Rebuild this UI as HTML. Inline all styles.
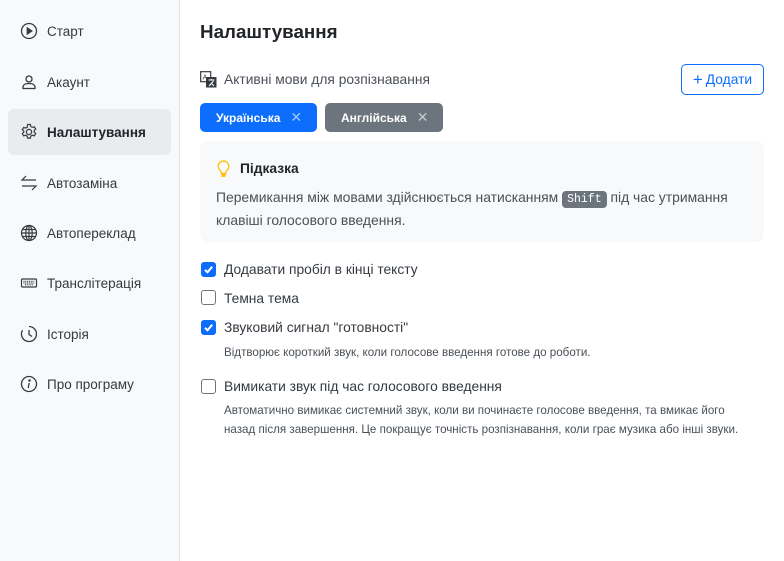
<!DOCTYPE html>
<html><head><meta charset="utf-8"><style>
*{box-sizing:border-box;margin:0;padding:0}
body{width:784px;height:561px;overflow:hidden;background:#fff;font-family:"Liberation Sans","DejaVu Sans",sans-serif;color:#212529;position:relative}
.side{position:absolute;left:0;top:0;width:180px;height:561px;background:#f8f9fa;border-right:1px solid #dee2e6}
.nav{position:absolute;left:8px;width:163px;height:46px;border-radius:6px;display:flex;align-items:center;padding-left:12px;font-size:13.5px;color:#343a40}
.nav svg{width:18px;height:18px;margin-right:9px;flex:none}
.nav.act{background:#e9ecef;font-weight:bold;color:#212529}
.abs{position:absolute}
h1{position:absolute;left:200px;top:21px;font-size:18.8px;font-weight:bold;color:#212529}
.chip{position:absolute;top:103px;height:29px;border-radius:5px;color:#fff;font-weight:bold;font-size:12px;display:flex;align-items:center;padding-left:16px}
.chip span{font-weight:normal;color:rgba(255,255,255,.6);margin-left:10px;font-size:14px}
.cb{position:absolute;left:201px;width:15px;height:15px;border-radius:3px;border:1px solid #6c757d;background:#fff}
.cb.on{background:#0d6efd;border-color:#0d6efd}
.lbl{position:absolute;left:224px;font-size:13.8px;color:#343a40}
.sub{position:absolute;left:224px;font-size:11.6px;color:#495057;line-height:19px}
</style></head><body>
<div class="side">
<div class="nav" style="top:8px"><svg viewBox="0 0 18 18" fill="none" stroke="#343a40" stroke-width="1.3"><circle cx="9" cy="9" r="7.5"/><path d="M7.3 6v6l4.5-3z" fill="#343a40"/></svg>Старт</div>
<div class="nav" style="top:59px"><svg viewBox="0 0 18 18" fill="none" stroke="#343a40" stroke-width="1.3"><circle cx="9" cy="6" r="3"/><path d="M3 15.5v-1.5c0-2 2-3.5 6-3.5s6 1.5 6 3.5v1.5z"/></svg>Акаунт</div>
<div class="nav act" style="top:109px"><svg viewBox="0 0 18 18" fill="none" stroke="#343a40" stroke-width="1.2"><circle cx="9" cy="9" r="2.6"/><path d="M7.6 1.5h2.8l.4 2 1.6.9 1.9-.7 1.4 2.4-1.5 1.3v1.8l1.5 1.3-1.4 2.4-1.9-.7-1.6.9-.4 2H7.6l-.4-2-1.6-.9-1.9.7-1.4-2.4 1.5-1.3V8.1L2.3 6.8l1.4-2.4 1.9.7 1.6-.9z"/></svg>Налаштування</div>
<div class="nav" style="top:160px"><svg viewBox="0 0 18 18" fill="none" stroke="#343a40" stroke-width="1.2"><path d="M16 6H2l4-4M2 12h14l-4 4"/></svg>Автозаміна</div>
<div class="nav" style="top:210px"><svg viewBox="0 0 18 18" fill="none" stroke="#343a40" stroke-width="1.2"><circle cx="9" cy="9" r="7.5"/><ellipse cx="9" cy="9" rx="3.2" ry="7.5"/><path d="M1.5 9h15M2.5 5.5h13M2.5 12.5h13M9 1.5v15"/></svg>Автопереклад</div>
<div class="nav" style="top:260px"><svg viewBox="0 0 18 18" fill="none" stroke="#343a40" stroke-width="1.2"><rect x="1.5" y="5" width="15" height="8" rx="1"/><path d="M3.5 7.3h11M3.5 9h11M5 10.8h8" stroke-dasharray="1 .8"/></svg>Транслітерація</div>
<div class="nav" style="top:311px"><svg viewBox="0 0 18 18" fill="none" stroke="#343a40" stroke-width="1.3"><path d="M9 1.5a7.5 7.5 0 1 1-6.5 3.7"/><path d="M9 5v4.5l3 2"/></svg>Історія</div>
<div class="nav" style="top:361px"><svg viewBox="0 0 18 18" fill="none" stroke="#343a40" stroke-width="1.3"><circle cx="9" cy="9" r="7.5"/><path d="M9.2 8l-1 5" /><circle cx="9.5" cy="5.5" r=".6" fill="#343a40"/></svg>Про програму</div>
</div>
<h1>Налаштування</h1>
<svg class="abs" style="left:200px;top:71px" width="17" height="17" viewBox="0 0 17 17"><rect x=".7" y=".7" width="10" height="10" fill="#fff" stroke="#343a40" stroke-width="1.2"/><text x="2.6" y="8.6" font-size="7" font-family="Liberation Sans" fill="#343a40">A</text><rect x="6" y="6" width="10.5" height="10.5" fill="#343a40"/><path d="M8.5 9h6M11.5 8v1.5M9 15l4.5-5M11 12l3 3" stroke="#fff" stroke-width="1"/></svg>
<div class="abs" style="left:224px;top:72px;font-size:13.8px;color:#495057">Активні мови для розпізнавання</div>
<div class="abs" style="left:681px;top:64px;width:83px;height:31px;border:1px solid #0d6efd;border-radius:5px;color:#0d6efd;font-size:13.8px;display:flex;align-items:center;justify-content:center"><span style="font-size:17px;margin-right:3px;font-weight:300">+</span>Додати</div>
<div class="chip" style="left:200px;width:117px;background:#0d6efd">Українська<span>✕</span></div>
<div class="chip" style="left:325px;width:118px;background:#6c757d">Англійська<span>✕</span></div>
<div class="abs" style="left:200px;top:141px;width:564px;height:101px;background:#f8f9fa;border-radius:8px"></div>
<svg class="abs" style="left:217px;top:160px" width="13" height="18" viewBox="0 0 13 18"><path d="M6.5 1a5.3 5.3 0 0 0-3.2 9.5c.6.5 1 1.3 1 2.2v.8h4.4v-.8c0-.9.4-1.7 1-2.2A5.3 5.3 0 0 0 6.5 1z" fill="none" stroke="#ffc107" stroke-width="1.4"/><rect x="4.3" y="14" width="4.4" height="3" rx="1" fill="#ffc107"/></svg>
<div class="abs" style="left:240px;top:161px;font-size:13.8px;font-weight:bold;color:#212529">Підказка</div>
<div class="abs" style="left:216px;top:187px;width:540px;font-size:13.9px;color:#495057;line-height:21px">Перемикання між мовами здійснюється натисканням <span style="background:#6c757d;color:#fff;font-family:'Liberation Mono',monospace;font-size:11.5px;padding:2px 5px;border-radius:4px">Shift</span> під час утримання клавіші голосового введення.</div>
<div class="cb on" style="top:262px"><svg width="13" height="13" viewBox="0 0 13 13"><path d="M3 6.8l2.5 2.5 4.7-5.6" stroke="#fff" stroke-width="2" fill="none"/></svg></div>
<div class="lbl" style="top:262px">Додавати пробіл в кінці тексту</div>
<div class="cb" style="top:290px"></div>
<div class="lbl" style="top:291px">Темна тема</div>
<div class="cb on" style="top:320px"><svg width="13" height="13" viewBox="0 0 13 13"><path d="M3 6.8l2.5 2.5 4.7-5.6" stroke="#fff" stroke-width="2" fill="none"/></svg></div>
<div class="lbl" style="top:320px">Звуковий сигнал "готовності"</div>
<div class="sub" style="top:343px">Відтворює короткий звук, коли голосове введення готове до роботи.</div>
<div class="cb" style="top:379px"></div>
<div class="lbl" style="top:379px">Вимикати звук під час голосового введення</div>
<div class="sub" style="top:401px;width:540px">Автоматично вимикає системний звук, коли ви починаєте голосове введення, та вмикає його<br>назад після завершення. Це покращує точність розпізнавання, коли грає музика або інші звуки.</div>
</body></html>
